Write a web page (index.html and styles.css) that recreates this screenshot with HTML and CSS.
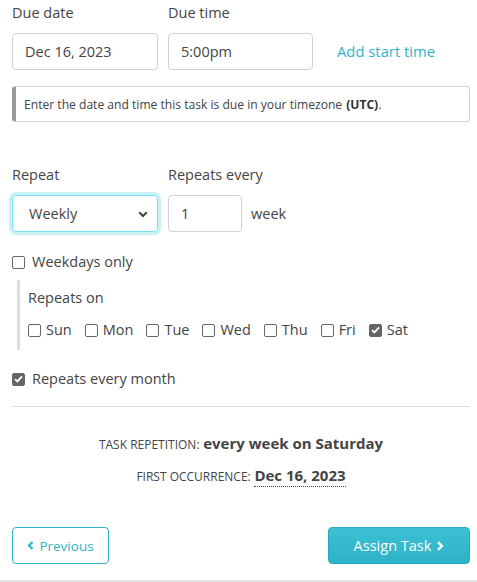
FILE: index.html
```html
<!DOCTYPE html>
<html>
<head>
<meta charset="utf-8">
<link rel="stylesheet" href="styles.css">
</head>
<body>
<div class="page">
  <div class="row due-row">
    <div class="field">
      <div class="label">Due date</div>
      <div class="input date">Dec 16, 2023</div>
    </div>
    <div class="field">
      <div class="label">Due time</div>
      <div class="input time">5:00pm</div>
    </div>
    <a class="link">Add start time</a>
  </div>

  <div class="info">Enter the date and time this task is due in your timezone <b>(UTC)</b>.</div>

  <div class="row repeat-row">
    <div class="field">
      <div class="label">Repeat</div>
      <div class="input select">Weekly
        <svg class="chev" width="10" height="7" viewBox="0 0 10 7"><path d="M1.2 1.2 L5 5 L8.8 1.2" fill="none" stroke="#444" stroke-width="2"/></svg>
      </div>
    </div>
    <div class="field">
      <div class="label">Repeats every</div>
      <div class="every">
        <div class="input num">1</div>
        <span class="unit">week</span>
      </div>
    </div>
  </div>

  <label class="check weekdays"><span class="box"></span>Weekdays only</label>

  <div class="repeats-on">
    <div class="label">Repeats on</div>
    <div class="days">
      <label class="check day"><span class="box"></span>Sun</label>
      <label class="check day"><span class="box"></span>Mon</label>
      <label class="check day"><span class="box"></span>Tue</label>
      <label class="check day"><span class="box"></span>Wed</label>
      <label class="check day"><span class="box"></span>Thu</label>
      <label class="check day"><span class="box"></span>Fri</label>
      <label class="check day"><span class="box on"><svg width="9" height="8" viewBox="0 0 9 8"><path d="M1 4.2 L3.4 6.4 L8 1.4" fill="none" stroke="#fff" stroke-width="1.8"/></svg></span>Sat</label>
    </div>
  </div>

  <label class="check month"><span class="box on"><svg width="9" height="8" viewBox="0 0 9 8"><path d="M1 4.2 L3.4 6.4 L8 1.4" fill="none" stroke="#fff" stroke-width="1.8"/></svg></span>Repeats every month</label>

  <hr class="sep">

  <div class="summary">
    <div class="sum-line"><span class="cap">TASK REPETITION:</span> <b>every week on Saturday</b></div>
    <div class="sum-line second"><span class="cap">FIRST OCCURRENCE:</span> <b class="dotted">Dec 16, 2023</b></div>
  </div>

  <div class="buttons">
    <button class="btn prev"><svg width="7" height="9" viewBox="0 0 7 9"><path d="M5.5 1 L2 4.5 L5.5 8" fill="none" stroke="#2fb4c9" stroke-width="2.2"/></svg>Previous</button>
    <button class="btn assign">Assign Task<svg width="8" height="10" viewBox="0 0 8 10"><path d="M2 1.2 L5.8 5 L2 8.8" fill="none" stroke="#fff" stroke-width="2.4"/></svg></button>
  </div>
</div>
</body>
</html>
```

FILE: styles.css
```css
* { box-sizing: border-box; }
html, body { margin: 0; padding: 0; background: #fff; }
body {
  font-family: "Open Sans", "Noto Sans", sans-serif;
  color: #444;
  font-size: 14px;
}
.page {
  width: 477px;
  height: 582px;
  padding: 3px 7px 0 12px;
  border-bottom: 2px solid #e2e2e2;
}
.row { display: flex; align-items: flex-end; }
.field { display: flex; flex-direction: column; margin-right: 10px; }
.label {
  font-size: 14.5px;
  line-height: 20px;
  color: #444;
  margin-bottom: 10px;
}
.input {
  height: 37px;
  border: 1px solid #cfd3d8;
  border-radius: 4px;
  padding: 0 0 0 12px;
  display: flex;
  align-items: center;
  font-size: 14.5px;
  color: #444;
}
.date { width: 146px; }
.time { width: 145px; }
.link {
  color: #2fb4c9;
  font-size: 14.8px;
  line-height: 37px;
  margin-left: 14px;
}
.info {
  margin-top: 16px;
  height: 36px;
  border: 1px solid #d4d4d4;
  border-left: 4px solid #999;
  border-radius: 4px;
  padding-left: 8px;
  display: flex;
  align-items: center;
  font-size: 12.1px;
  color: #444;
  white-space: nowrap;
}
.info b { color: #333; margin-left: 4px; }
.repeat-row { margin-top: 43px; }
.select {
  width: 146px;
  padding: 0 0 0 16px;
  border: 1px solid #74e2f0;
  box-shadow: 0 0 0 3px #c9f1f6;
  position: relative;
}
.chev { position: absolute; right: 9px; top: 15px; }
.every { display: flex; align-items: center; }
.num { width: 74px; }
.unit { margin-left: 9px; font-size: 14.5px; }
.check {
  display: flex;
  align-items: center;
  font-size: 14.5px;
  line-height: 20px;
  color: #444;
}
.box {
  width: 13px;
  height: 13px;
  border: 1px solid #666;
  border-radius: 2px;
  margin-right: 7px;
  display: inline-flex;
  align-items: center;
  justify-content: center;
  flex: none;
}
.box.on { background: #666; }
.weekdays { margin-top: 20px; }
.repeats-on {
  margin-top: 8px;
  margin-left: 5px;
  border-left: 3px solid #ddd;
  padding: 8px 0 10px 8px;
}
.repeats-on .label { margin-bottom: 12px; }
.days { display: flex; }
.day { margin-right: 13px; }
.day .box { margin-right: 5px; }
.month { margin-top: 19px; }
.sep {
  margin: 17px 0 0 0;
  border: 0;
  border-top: 1px solid #ddd;
  width: 458px;
}
.summary { text-align: center; margin-top: 26px; }
.sum-line { line-height: 20px; }
.cap { font-size: 12px; color: #444; }
.sum-line b { font-size: 15px; color: #444; }
.second { margin-top: 10px; }
.dotted { border-bottom: 1px dotted #444; padding-bottom: 1px; }
.buttons {
  display: flex;
  justify-content: space-between;
  margin-top: 40px;
  width: 458px;
}
.btn {
  height: 37px;
  border-radius: 4px;
  font-family: "Open Sans", "Noto Sans", sans-serif;
  font-size: 13.5px;
  display: flex;
  align-items: center;
  justify-content: center;
}
.prev {
  width: 97px;
  background: #fff;
  border: 1px solid #2fb4c9;
  color: #2fb4c9;
}
.prev svg { margin-right: 5px; }
.assign {
  width: 142px;
  background: linear-gradient(#3cc0d2, #2eb2c8);
  border: 1px solid #2aaabf;
  color: #fff;
  font-size: 14.5px;
}
.assign svg { margin-left: 5px; }
```
